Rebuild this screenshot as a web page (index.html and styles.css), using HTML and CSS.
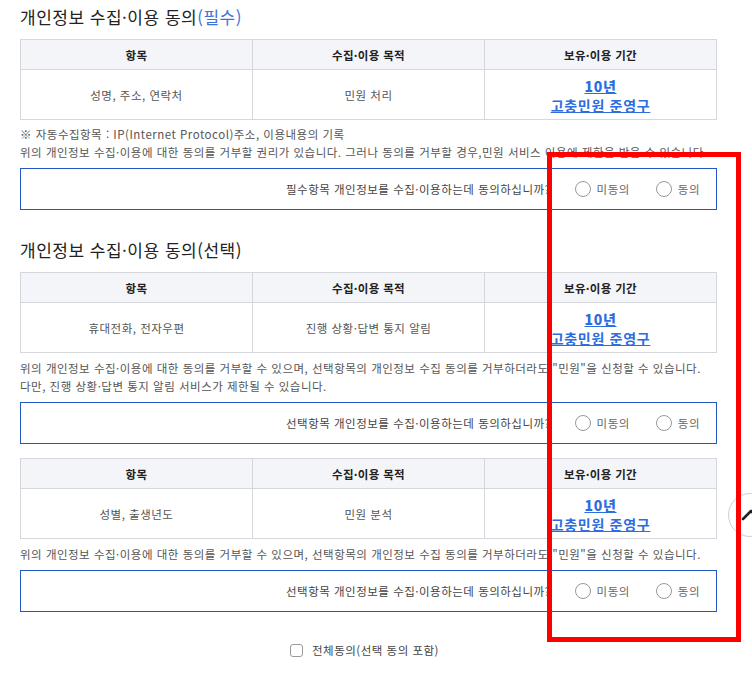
FILE: index.html
```html
<!DOCTYPE html>
<html lang="ko">
<head>
<meta charset="utf-8">
<title>개인정보 수집·이용 동의</title>
<link rel="stylesheet" href="styles.css">
</head>
<body>
<div class="wrap">
  <section class="sec">
    <h2 class="title">개인정보 수집·이용 동의<span class="req">(필수)</span></h2>
    <table class="info">
      <thead>
        <tr><th>항목</th><th>수집·이용 목적</th><th>보유·이용 기간</th></tr>
      </thead>
      <tbody>
        <tr><td>성명, 주소, 연락처</td><td>민원 처리</td><td><a class="period" href="#"><b>10년</b><br>고충민원 준영구</a></td></tr>
      </tbody>
    </table>
    <p class="note note1">※ 자동수집항목 : IP(Internet Protocol)주소, 이용내용의 기록<br>위의 개인정보 수집·이용에 대한 동의를 거부할 권리가 있습니다. 그러나 동의를 거부할 경우,민원 서비스 이용에 제한을 받을 수 있습니다.</p>
    <div class="agree">
      <span class="q">필수항목 개인정보를 수집·이용하는데 동의하십니까?</span>
      <label class="radio"><span class="dot"></span>미동의</label>
      <label class="radio"><span class="dot"></span>동의</label>
    </div>
  </section>

  <section class="sec sec2">
    <h2 class="title">개인정보 수집·이용 동의(선택)</h2>
    <table class="info">
      <thead>
        <tr><th>항목</th><th>수집·이용 목적</th><th>보유·이용 기간</th></tr>
      </thead>
      <tbody>
        <tr><td>휴대전화, 전자우편</td><td>진행 상황·답변 통지 알림</td><td><a class="period" href="#"><b>10년</b><br>고충민원 준영구</a></td></tr>
      </tbody>
    </table>
    <p class="note">위의 개인정보 수집·이용에 대한 동의를 거부할 수 있으며, 선택항목의 개인정보 수집 동의를 거부하더라도 "민원"을 신청할 수 있습니다.<br>다만, 진행 상황·답변 통지 알림 서비스가 제한될 수 있습니다.</p>
    <div class="agree">
      <span class="q">선택항목 개인정보를 수집·이용하는데 동의하십니까?</span>
      <label class="radio"><span class="dot"></span>미동의</label>
      <label class="radio"><span class="dot"></span>동의</label>
    </div>

    <table class="info info3">
      <thead>
        <tr><th>항목</th><th>수집·이용 목적</th><th>보유·이용 기간</th></tr>
      </thead>
      <tbody>
        <tr><td>성별, 출생년도</td><td>민원 분석</td><td><a class="period" href="#"><b>10년</b><br>고충민원 준영구</a></td></tr>
      </tbody>
    </table>
    <p class="note">위의 개인정보 수집·이용에 대한 동의를 거부할 수 있으며, 선택항목의 개인정보 수집 동의를 거부하더라도 "민원"을 신청할 수 있습니다.</p>
    <div class="agree">
      <span class="q">선택항목 개인정보를 수집·이용하는데 동의하십니까?</span>
      <label class="radio"><span class="dot"></span>미동의</label>
      <label class="radio"><span class="dot"></span>동의</label>
    </div>
  </section>

  <div class="all">
    <label class="check"><span class="box"></span>전체동의(선택 동의 포함)</label>
  </div>
</div>

<div class="highlight"></div>
<button class="totop" type="button" aria-label="맨 위로">
  <svg width="44" height="44" viewBox="0 0 44 44"><polyline points="15,26 23,18 31,26" fill="none" stroke="#222" stroke-width="2.6" stroke-linecap="round" stroke-linejoin="round"/></svg>
</button>
</body>
</html>
```
FILE: styles.css
```css
html, body {
  margin: 0;
  padding: 0;
  background: #fff;
}
body {
  font-family: "Noto Sans CJK KR", "Noto Sans", sans-serif;
  color: #555;
  font-size: 11.5px;
  letter-spacing: 0.5px;
  width: 752px;
  height: 674px;
  overflow: hidden;
  position: relative;
}
.wrap {
  padding: 5px 35px 0 20px;
}
.title {
  margin: 0 0 10px;
  font-size: 17px;
  font-weight: 400;
  line-height: 24px;
  color: #222;
  letter-spacing: 0.5px;
}
.req {
  color: #3b73d9;
}
.sec2 {
  margin-top: 28px;
}
.info {
  width: 100%;
  border-collapse: collapse;
  table-layout: fixed;
}
.info th, .info td {
  border: 1px solid #d6d7dd;
  text-align: center;
  padding: 0;
}
.info th {
  height: 29px;
  background: #f4f5f9;
  font-weight: 700;
  color: #222;
  font-size: 11.5px;
  letter-spacing: 0.3px;
}
.info td {
  height: 49px;
  color: #555;
}
.info3 {
  margin-top: 14px;
}
.period {
  color: #2e6de0;
  text-decoration: underline;
  font-size: 14px;
  letter-spacing: 0.7px;
  line-height: 19px;
  font-weight: 700;
  display: inline-block;
  padding-top: 2px;
}
.note {
  margin: 6px 0 7px;
  line-height: 18px;
  color: #555;
}
.note1 {
  margin-top: 5px;
}
.agree {
  height: 40px;
  border: 1px solid #2557c2;
  display: flex;
  align-items: center;
  justify-content: flex-end;
  padding-right: 16px;
  color: #444;
}
.q {
  margin-right: 24px;
}
.radio {
  display: flex;
  align-items: center;
  color: #666;
}
.radio + .radio {
  margin-left: 26px;
}
.dot {
  width: 14px;
  height: 14px;
  border: 1px solid #999;
  border-radius: 50%;
  margin-right: 6px;
  background: #fff;
}
.all {
  margin-top: 28px;
  display: flex;
  justify-content: center;
  line-height: 20px;
}
.check {
  display: flex;
  align-items: center;
  color: #444;
  margin-left: -8px;
}
.box {
  width: 11px;
  height: 11px;
  border: 1px solid #999;
  border-radius: 3px;
  margin-right: 9px;
  background: #fff;
}
.highlight {
  position: absolute;
  left: 547px;
  top: 152px;
  width: 184px;
  height: 480px;
  border: 5px solid #ff0000;
  z-index: 2;
}
.totop {
  position: absolute;
  left: 728px;
  top: 493px;
  width: 44px;
  height: 44px;
  padding: 0;
  border: 1px solid #d0d0d0;
  border-radius: 50%;
  background: #fff;
  z-index: 1;
}
.totop svg {
  display: block;
  margin: -1px;
}
```
